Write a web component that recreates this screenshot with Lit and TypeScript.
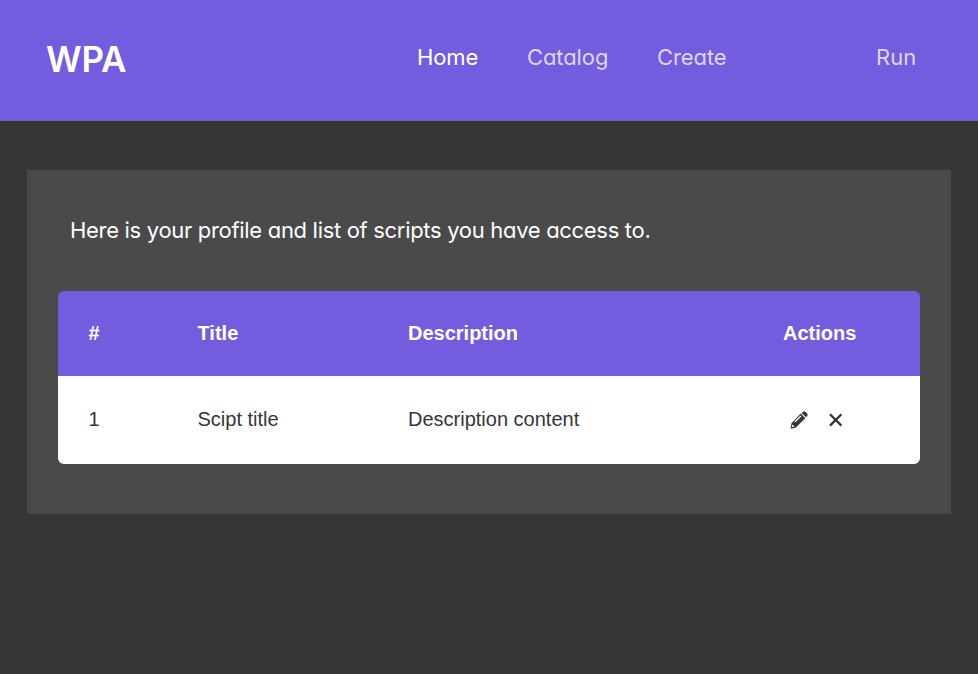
import { LitElement, html, css } from "lit";
import { customElement } from "lit/decorators.js";

const scripts = [{ id: 1, title: "Scipt title", description: "Description content" }];

@customElement("app-root")
export class AppRoot extends LitElement {
  static styles = css`
    :host {
      display: block;
      box-sizing: border-box;
      min-height: 100vh;
      background: #363636;
      font-family: "Liberation Sans", Arial, sans-serif;
      font-size: 20px;
    }
    .bar {
      display: flex;
      align-items: center;
      box-sizing: border-box;
      height: 121px;
      padding: 0 61px 7px 46px;
      background: #735cdd;
      color: #fff;
      font-family: Inter, sans-serif;
      font-feature-settings: "cv11";
      font-size: 22px;
      line-height: 30px;
      white-space: nowrap;
    }
    .brand {
      width: 371px;
      padding-top: 3px;
      font-size: 35px;
      font-weight: 600;
      letter-spacing: -0.2px;
    }
    nav {
      display: flex;
      flex: 1;
    }
    .link {
      width: 110px;
      color: #dcd6f6;
      letter-spacing: -0.1px;
    }
    .link.catalog { width: 130px; letter-spacing: -0.1px; }
    .link.active { color: #fff; }
    .link.run { width: 41px; margin-left: auto; letter-spacing: 0.1px; }
    .panel {
      box-sizing: border-box;
      height: 344px;
      margin: 49px 27px 0;
      padding: 45px 31px 0;
      background: #4a4a4a;
    }
    .intro {
      margin: 0 0 46px 12px;
      color: #fff;
      font-family: Inter, sans-serif;
      font-feature-settings: "cv11";
      font-size: 22px;
      line-height: 30px;
      letter-spacing: -0.31px;
      white-space: nowrap;
    }
    .table {
      overflow: hidden;
      border-radius: 6px;
    }
    .row {
      display: grid;
      grid-template-columns: 109px 210.5px 375px 1fr;
      align-items: center;
      box-sizing: border-box;
      height: 88px;
      padding: 0 0 2px 30.5px;
      background: #fff;
      color: #363636;
    }
    .row.head {
      height: 85px;
      padding-bottom: 0;
      background: #735cdd;
      color: #fff;
      font-weight: 700;
    }
    .actions {
      display: flex;
      align-items: center;
      padding: 2px 0 0 7px;
      gap: 21px;
    }
    svg { display: block; }
  `;

  render() {
    return html`
      <header class="bar">
        <div class="brand">WPA</div>
        <nav>
          <span class="link active">Home</span>
          <span class="link catalog">Catalog</span>
          <span class="link">Create</span>
          <span class="link run">Run</span>
        </nav>
      </header>
      <main class="panel">
        <p class="intro">Here is your profile and list of scripts you have access to.</p>
        <div class="table">
          <div class="row head">
            <span>#</span><span>Title</span><span>Description</span><span>Actions</span>
          </div>
          ${scripts.map(
            (s) => html`<div class="row">
              <span>${s.id}</span><span>${s.title}</span><span>${s.description}</span>
              <span class="actions">
                <svg width="18" height="18" viewBox="0 0 18 18" fill="#363636">
                  <path fill-rule="evenodd" d="M10.8 2.6 15.3 7.2 5.6 16.7 0.5 17.7 1.5 12.2ZM2.4 13.4 1.8 16.3 4.6 15.6ZM10.5 4.5 4.4 10.4 5.4 11.2 11.4 5.4Z" />
                  <path d="M11.6 1.9 13 .7Q14.3-.2 15.4.8L17.2 2.6Q18 3.6 17.2 4.9L16 6.3Z" />
                </svg>
                <svg width="14" height="14" viewBox="0 0 14 14" fill="none" stroke="#363636" stroke-width="2.3">
                  <path d="M1 1.2 12.4 12.6M12.4 1.2 1 12.6" />
                </svg>
              </span>
            </div>`
          )}
        </div>
      </main>
    `;
  }
}
